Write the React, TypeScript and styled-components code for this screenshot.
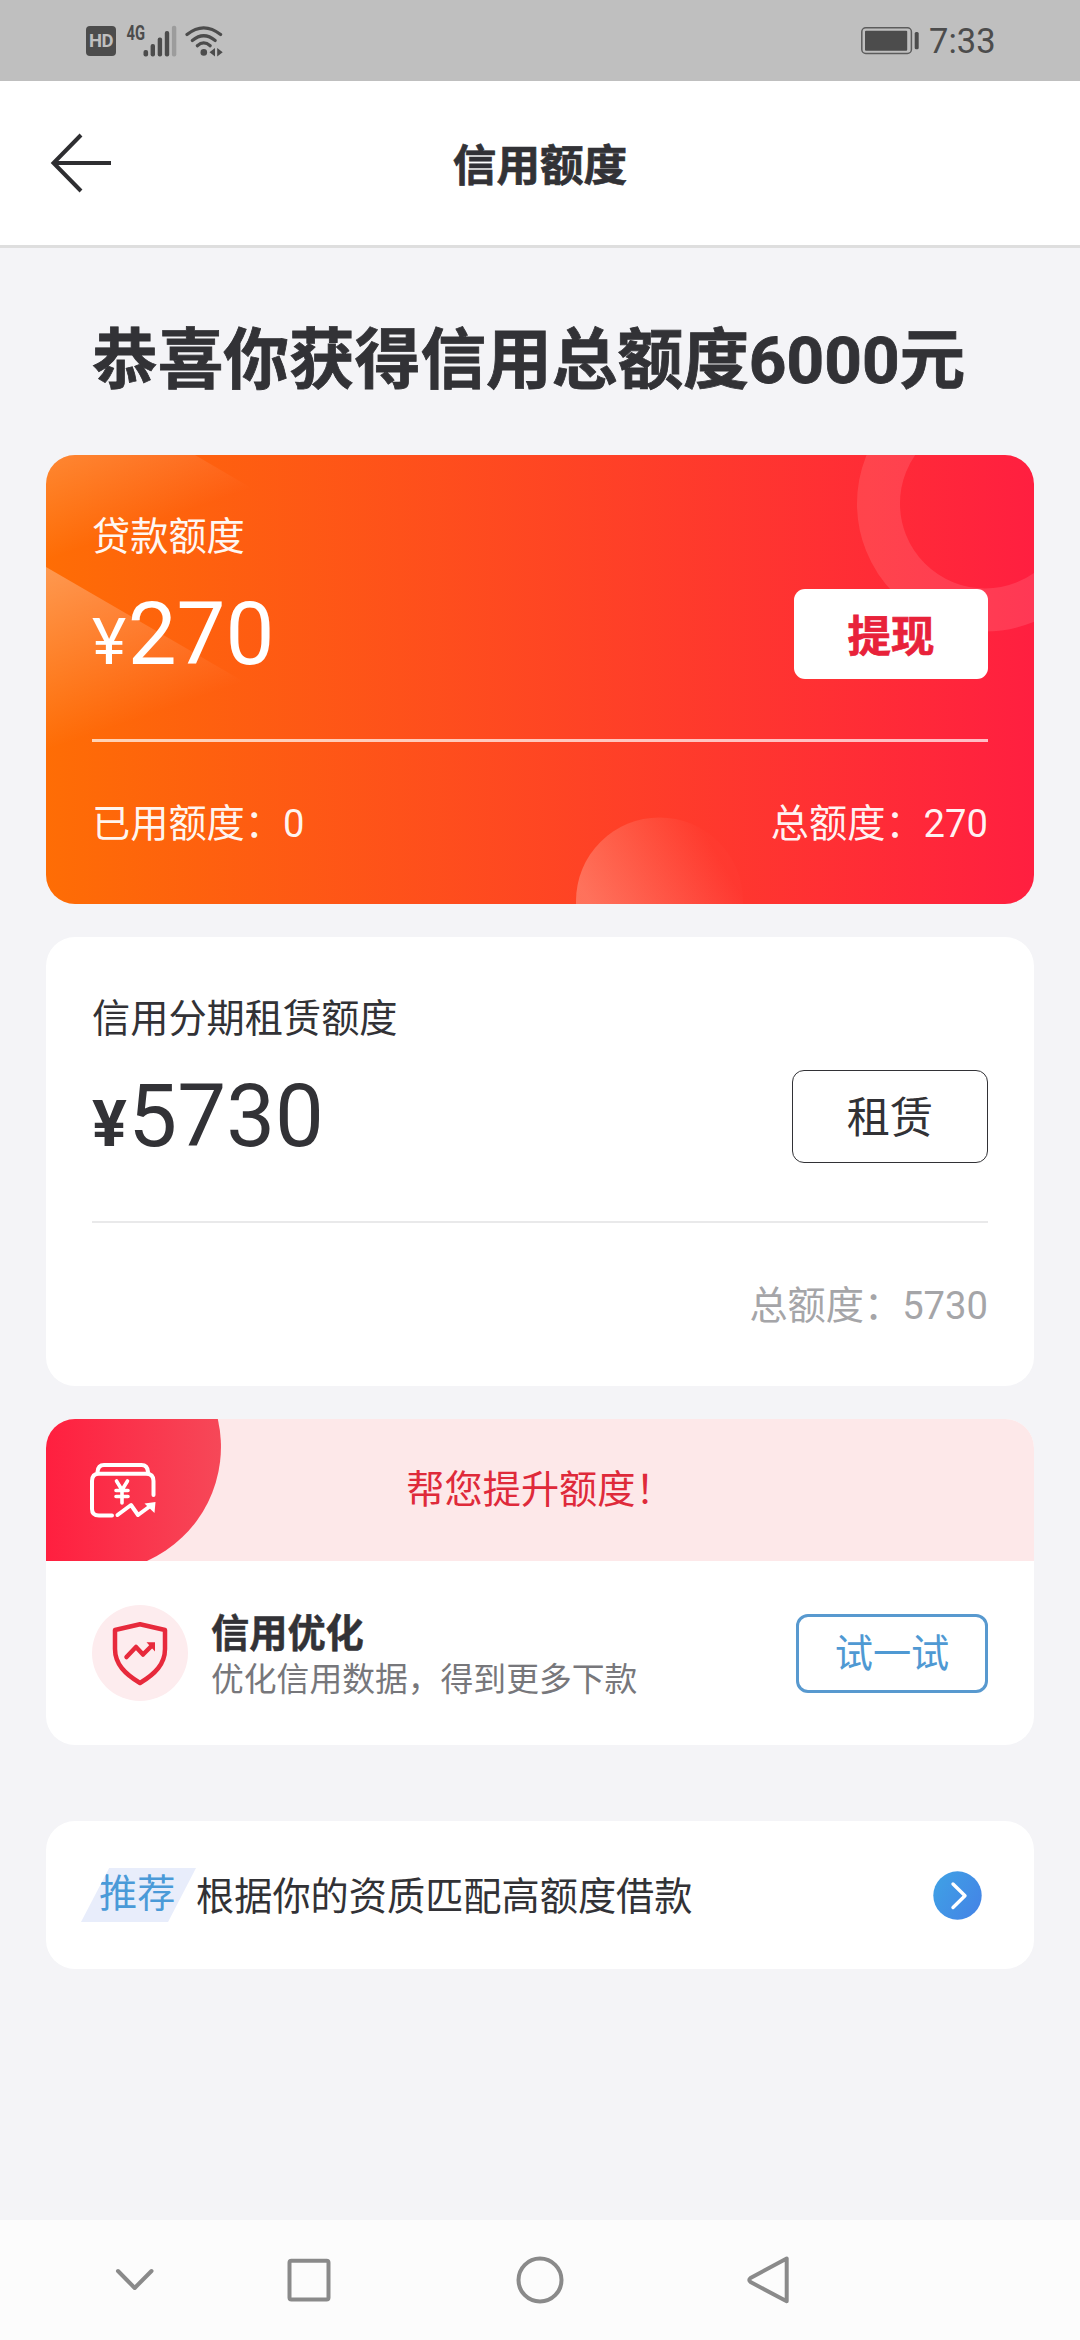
import React from "react";
import styled, { createGlobalStyle } from "styled-components";

const GlobalStyle = createGlobalStyle`
  * { box-sizing: border-box; }
  body {
    margin: 0;
    background: #f4f4f7;
    font-family: Roboto, "Noto Sans CJK SC", sans-serif;
    color: #323236;
  }
  button { font-family: inherit; margin: 0; padding: 0; cursor: pointer; }
  svg { display: block; flex: none; }
`;

const Screen = styled.div`
  width: 1080px;
  height: 2340px;
  display: flex;
  flex-direction: column;
  background: #f4f4f7;
  overflow: hidden;
`;

const StatusBar = styled.div`
  height: 81px;
  flex: none;
  display: flex;
  justify-content: space-between;
  align-items: center;
  padding: 0 86px;
  background: #bfbfbf;
  color: #4c4c4c;
`;

const StatusGroup = styled.div`
  display: flex;
  align-items: center;
`;

const HdBadge = styled.span`
  width: 30px;
  height: 30px;
  border-radius: 4px;
  background: #4c4c4c;
  color: #bfbfbf;
  font-size: 18.5px;
  font-weight: 700;
  line-height: 30px;
  text-align: center;
  letter-spacing: -0.5px;
`;

const Clock = styled.span`
  margin-left: 9px;
  font-size: 34.5px;
  line-height: 40px;
  width: 65px;
`;

const Header = styled.header`
  height: 167px;
  flex: none;
  display: grid;
  grid-template-columns: 160px 1fr 160px;
  align-items: center;
  background: #fff;
  border-bottom: 3px solid #dedede;
`;

const BackButton = styled.button`
  border: 0;
  background: none;
  padding-left: 50px;
`;

const HeaderTitle = styled.h1`
  margin: 0;
  padding-top: 8px;
  text-align: center;
  font-size: 43.6px;
  line-height: 60px;
  font-weight: 700;
  -webkit-text-stroke: 0.7px currentColor;
`;

const Content = styled.main`
  flex: 1;
  padding: 0 46px;
`;

const Headline = styled.h2`
  margin: 73px 0 54px;
  padding-left: 46px;
  font-size: 65.7px;
  line-height: 80px;
  font-weight: 700;
  white-space: nowrap;
  -webkit-text-stroke: 0.8px currentColor;
`;

const Card = styled.section<{ $gap?: number }>`
  position: relative;
  margin-bottom: ${(p) => p.$gap ?? 33}px;
  border-radius: 29px;
  background: #fff;
  overflow: hidden;
`;

const QuotaCard = styled(Card)<{ $hot?: boolean }>`
  height: 449px;
  padding: 52px 46px 0;
  background: ${(p) => (p.$hot ? "linear-gradient(90deg, #fe6d05, #ff1f40)" : "#fff")};
  color: ${(p) => (p.$hot ? "#fff" : "#323236")};
`;

const CardArt = styled.svg`
  position: absolute;
  left: 0;
  top: 0;
`;

const QuotaBody = styled.div`
  position: relative;
  display: flex;
  flex-direction: column;
`;

const QuotaLabel = styled.div<{ $soft?: boolean }>`
  font-size: 38.2px;
  line-height: 60px;
  opacity: ${(p) => (p.$soft ? 0.95 : 1)};
`;

const AmountRow = styled.div`
  height: 94px;
  margin-top: 20px;
  display: flex;
  align-items: center;
  justify-content: space-between;
`;

const Amount = styled.div`
  font-size: 87px;
  line-height: 94px;
  white-space: nowrap;
`;

const Currency = styled.span<{ $bold?: boolean }>`
  margin-right: 1.5px;
  font-size: 65px;
  line-height: 1;
  font-weight: ${(p) => (p.$bold ? 700 : 400)};
`;

const SolidButton = styled.button`
  width: 194px;
  height: 90px;
  padding-top: 7px;
  border: 0;
  border-radius: 11px;
  background: #fff;
  color: #e8223a;
  font-size: 43.4px;
  font-weight: 700;
  line-height: 1;
  -webkit-text-stroke: 0.7px currentColor;
`;

const OutlineButton = styled.button<{ $blue?: boolean }>`
  width: ${(p) => (p.$blue ? 192 : 196)}px;
  height: ${(p) => (p.$blue ? 79 : 93)}px;
  padding-top: ${(p) => (p.$blue ? 3 : 6)}px;
  border: ${(p) => (p.$blue ? "3px solid #5899cf" : "1px solid #323236")};
  border-radius: 12px;
  background: #fff;
  color: ${(p) => (p.$blue ? "#4f99d3" : "#323236")};
  font-size: ${(p) => (p.$blue ? 38.2 : 43.2)}px;
  line-height: 1;
`;

const Divider = styled.div<{ $hot?: boolean }>`
  height: ${(p) => (p.$hot ? 3 : 2)}px;
  margin: 58px 0 ${(p) => (p.$hot ? 0 : 1)}px;
  background: ${(p) => (p.$hot ? "rgba(255,255,255,0.7)" : "#e9e9ea")};
`;

const QuotaFooter = styled.div<{ $muted?: boolean }>`
  height: 163px;
  display: flex;
  align-items: center;
  justify-content: space-between;
  font-size: 38.2px;
  line-height: 60px;
  color: ${(p) => (p.$muted ? "#a5a5a8" : "rgba(255,255,255,0.94)")};
`;

const Banner = styled.div`
  position: relative;
  height: 142px;
  display: flex;
  align-items: center;
  justify-content: center;
  background: #fde8e9;
  color: #df2a3a;
  font-size: 38.2px;
  line-height: 60px;
`;

const BoostRow = styled.div`
  height: 184px;
  display: flex;
  align-items: center;
  padding: 0 46px;
`;

const BoostIcon = styled.div`
  width: 96px;
  height: 96px;
  flex: none;
  border-radius: 50%;
  background: #fdecee;
  display: flex;
  align-items: center;
  justify-content: center;
`;

const BoostText = styled.div`
  flex: 1;
  padding: 8px 0 0 23px;
  line-height: 46px;
`;

const BoostTitle = styled.div`
  font-size: 38.2px;
  font-weight: 700;
  -webkit-text-stroke: 0.5px currentColor;
`;

const BoostNote = styled.div`
  font-size: 32.8px;
  color: #77777b;
`;

const RecommendCard = styled(Card)`
  height: 148px;
  display: flex;
  align-items: center;
  padding: 0 52px 0 35px;
`;

const Tag = styled.span`
  width: 115px;
  height: 54px;
  flex: none;
  padding-left: 18px;
  background: #e8edfb;
  clip-path: polygon(24.5% 0, 100% 0, 75.7% 100%, 0 100%);
  color: #4a9ad8;
  font-size: 38.2px;
  line-height: 53px;
  white-space: nowrap;
`;

const RecommendText = styled.span`
  flex: 1;
  font-size: 38.2px;
  line-height: 60px;
  padding-top: 4px;
`;

const NavBar = styled.nav`
  height: 120px;
  flex: none;
  display: flex;
  align-items: center;
  background: #fcfcfc;
  padding-left: 112px;
`;

const NavItem = styled.div<{ $before?: number }>`
  margin-left: ${(p) => p.$before ?? 0}px;
`;

const SignalIcon = () => (
  <svg width="64" height="40" viewBox="120 20 64 40" fill="#4c4c4c">
    <text
      x="126.5"
      y="38.6"
      fontFamily="Roboto, sans-serif"
      fontSize="19.5"
      fontWeight="700"
      textLength="18.5"
      lengthAdjust="spacingAndGlyphs"
    >
      4G
    </text>
    <rect x="143.5" y="49" width="4.6" height="6.6" rx="2" />
    <rect x="150.6" y="43" width="4.4" height="12.6" rx="2" />
    <rect x="157.7" y="36.5" width="4.4" height="19" rx="2" />
    <rect x="164.8" y="30" width="4.4" height="25.5" rx="2" />
    <rect x="171.9" y="24.8" width="4.4" height="30.7" rx="2" fill="#9c9c9c" />
  </svg>
);

const WifiIcon = () => (
  <svg width="42" height="40" viewBox="184 20 42 40" fill="none" stroke="#4c4c4c" strokeWidth="3.2" strokeLinecap="round">
    <path d="M187 33.6Q203.7 20 220.6 33.6" />
    <path d="M192.3 39.5Q203.7 30 215.2 39.5" />
    <path d="M197.3 44.8Q203.7 39 210.2 44.8" />
    <circle cx="203.8" cy="51.4" r="3.3" fill="#4c4c4c" stroke="none" />
    <path d="M209.5 51.3L215 47V55.6ZM217.2 47L222.7 51.3L217.2 55.6Z" fill="#4c4c4c" stroke="none" />
  </svg>
);

const BatteryIcon = () => (
  <svg width="59" height="30" viewBox="862 26 59 30">
    <rect x="862.8" y="27.8" width="49.6" height="25.6" rx="4" fill="none" stroke="#5c5c5c" strokeWidth="1.5" />
    <rect x="866" y="30.7" width="42.2" height="20" rx="1" fill="#4c4c4c" />
    <rect x="915.7" y="32" width="4" height="17.2" rx="1.5" fill="#4c4c4c" />
  </svg>
);

const BackIcon = () => (
  <svg width="64" height="64" viewBox="0 0 64 64" fill="none" stroke="#2e2e31" strokeWidth="4">
    <path d="M61 32H4M31 4L3.5 32L31 60" />
  </svg>
);

const HotArt = () => (
  <CardArt width="988" height="449" viewBox="0 0 988 449" fill="none">
    <defs>
      <linearGradient id="rayTop" gradientUnits="userSpaceOnUse" x1="0" y1="0" x2="33" y2="94">
        <stop offset="0" stopColor="#fff" stopOpacity="0.18" />
        <stop offset="1" stopColor="#fff" stopOpacity="0" />
      </linearGradient>
      <linearGradient id="rayLow" gradientUnits="userSpaceOnUse" x1="35" y1="99" x2="92" y2="264">
        <stop offset="0" stopColor="#fff" stopOpacity="0.3" />
        <stop offset="1" stopColor="#fff" stopOpacity="0" />
      </linearGradient>
      <linearGradient id="bubble" gradientUnits="userSpaceOnUse" x1="545" y1="449" x2="660" y2="380">
        <stop offset="0" stopColor="#fff" stopOpacity="0.25" />
        <stop offset="1" stopColor="#fff" stopOpacity="0.01" />
      </linearGradient>
    </defs>
    <path d="M0 0H149L330 106H0Z" fill="url(#rayTop)" />
    <path d="M0 112L400 344V449H0Z" fill="url(#rayLow)" />
    <circle cx="939" cy="48.5" r="106.5" stroke="#fff" strokeOpacity="0.115" strokeWidth="43" />
    <circle cx="613.5" cy="446" r="83.5" fill="url(#bubble)" />
  </CardArt>
);

const BannerArt = () => (
  <CardArt width="176" height="142" viewBox="0 0 176 142" fill="none">
    <defs>
      <linearGradient id="corner" x1="0" y1="0" x2="1" y2="0">
        <stop offset="0" stopColor="#ff1f3f" />
        <stop offset="1" stopColor="#f64858" />
      </linearGradient>
    </defs>
    <path d="M0 0H171.8A125 125 0 0 1 101 142H0Z" fill="url(#corner)" />
    <g stroke="#fff" strokeWidth="4" strokeLinecap="round" strokeLinejoin="round">
      <path d="M107.5 76V62Q107.5 54.7 100 54.7H53Q46 54.7 46 62V90Q46 96.5 53 96.5H66" />
      <path d="M51.5 53Q52 46 58 46H95.5Q101.500 46 102 53" />
      <path d="M71.5 96L85 86L92 96L105 86.5" />
      <path d="M70.5 62L76 71L81.5 62M76 71V84M70 71.5H82M70 77.5H82" strokeWidth="3.6" />
    </g>
    <path d="M98.5 84.5L109.5 83L108.5 94Z" fill="#fff" />
  </CardArt>
);

const ShieldIcon = () => (
  <svg width="60" height="68" viewBox="0 0 60 68" fill="none" stroke="#e72a3c" strokeWidth="4.5" strokeLinejoin="round">
    <path d="M30 5.2L5 11V30C5 45 15 55 30 64C45 55 55 45 55 30V11Z" />
    <path d="M16.5 38L26 28L33 35.5L41.5 27" strokeLinecap="round" />
    <path d="M36.5 23.3H45V32.5Z" fill="#e72a3c" stroke="none" />
  </svg>
);

const GoIcon = () => (
  <svg width="49" height="49" viewBox="0 0 49 49">
    <defs>
      <linearGradient id="go" x1="0" y1="0.2" x2="1" y2="0.8">
        <stop offset="0" stopColor="#3fa0e5" />
        <stop offset="1" stopColor="#4484e6" />
      </linearGradient>
    </defs>
    <circle cx="24.5" cy="24.5" r="24.2" fill="url(#go)" />
    <path d="M20 13L32 24.7L20 36.5" fill="none" stroke="#fff" strokeWidth="3.4" strokeLinecap="round" strokeLinejoin="round" />
  </svg>
);

const navStroke = { fill: "none", stroke: "#8a8a8a", strokeWidth: 4, strokeLinecap: "round", strokeLinejoin: "round" } as const;

export default function App() {
  return (
    <>
      <GlobalStyle />
      <Screen lang="zh-CN">
        <StatusBar>
          <StatusGroup>
            <HdBadge>HD</HdBadge>
            <NavItem $before={4}>
              <SignalIcon />
            </NavItem>
            <WifiIcon />
          </StatusGroup>
          <StatusGroup>
            <BatteryIcon />
            <Clock>7:33</Clock>
          </StatusGroup>
        </StatusBar>

        <Header>
          <BackButton aria-label="返回">
            <BackIcon />
          </BackButton>
          <HeaderTitle>信用额度</HeaderTitle>
        </Header>

        <Content>
          <Headline>恭喜你获得信用总额度6000元</Headline>

          <QuotaCard $hot>
            <HotArt />
            <QuotaBody>
              <QuotaLabel $soft>贷款额度</QuotaLabel>
              <AmountRow>
                <Amount>
                  <Currency>¥</Currency>270
                </Amount>
                <SolidButton>提现</SolidButton>
              </AmountRow>
              <Divider $hot />
              <QuotaFooter>
                <span>已用额度：0</span>
                <span>总额度：270</span>
              </QuotaFooter>
            </QuotaBody>
          </QuotaCard>

          <QuotaCard>
            <QuotaBody>
              <QuotaLabel>信用分期租赁额度</QuotaLabel>
              <AmountRow>
                <Amount>
                  <Currency $bold>¥</Currency>5730
                </Amount>
                <OutlineButton>租赁</OutlineButton>
              </AmountRow>
              <Divider />
              <QuotaFooter $muted>
                <span />
                <span>总额度：5730</span>
              </QuotaFooter>
            </QuotaBody>
          </QuotaCard>

          <Card $gap={76}>
            <Banner>
              <BannerArt />
              帮您提升额度！
            </Banner>
            <BoostRow>
              <BoostIcon>
                <ShieldIcon />
              </BoostIcon>
              <BoostText>
                <BoostTitle>信用优化</BoostTitle>
                <BoostNote>优化信用数据，得到更多下款</BoostNote>
              </BoostText>
              <OutlineButton $blue>试一试</OutlineButton>
            </BoostRow>
          </Card>

          <RecommendCard>
            <Tag>推荐</Tag>
            <RecommendText>根据你的资质匹配高额度借款</RecommendText>
            <GoIcon />
          </RecommendCard>
        </Content>

        <NavBar>
          <NavItem>
            <svg width="46" height="48" viewBox="0 0 46 48" {...navStroke}>
              <path d="M6 15L22.7 32L39.5 15" />
            </svg>
          </NavItem>
          <NavItem $before={127}>
            <svg width="48" height="48" viewBox="0 0 48 48" {...navStroke}>
              <rect x="4.5" y="4.7" width="39" height="38.8" rx="2" />
            </svg>
          </NavItem>
          <NavItem $before={183}>
            <svg width="48" height="48" viewBox="0 0 48 48" {...navStroke}>
              <circle cx="24" cy="24" r="21.5" />
            </svg>
          </NavItem>
          <NavItem $before={182}>
            <svg width="48" height="48" viewBox="0 0 48 48" {...navStroke}>
              <path d="M40.7 2.5V45.3L4.5 26Q2 24 4.5 22Z" />
            </svg>
          </NavItem>
        </NavBar>
      </Screen>
    </>
  );
}
